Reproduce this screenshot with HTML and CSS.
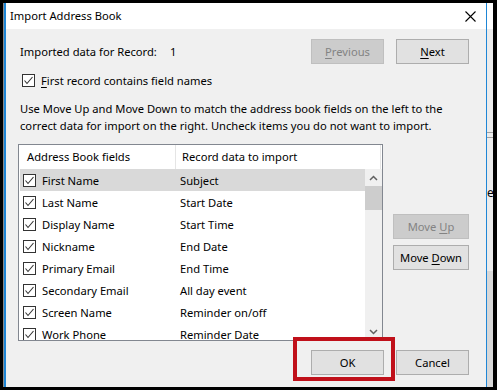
FILE: index.html
```html
<!DOCTYPE html>
<html lang="en">
<head>
<meta charset="utf-8">
<title>Import Address Book</title>
<link rel="stylesheet" href="styles.css">
</head>
<body>

<div class="screen">

<div class="dialog">

	<div class="titlebar">
		<span>Import Address Book</span>
		<svg class="close_icon" width="11" height="11" viewBox="0 0 11 11"><path d="M0.5 0.5 L10.5 10.5 M10.5 0.5 L0.5 10.5" stroke="#000" stroke-width="1.1" fill="none"/></svg>
	</div>

	<div class="content">

		<div class="record_row">
			<span class="record_label">Imported data for Record:</span>
			<span class="record_num">1</span>
			<div class="button_pair">
				<button class="win_button" disabled><u>P</u>revious</button>
				<button class="win_button"><u>N</u>ext</button>
			</div>
		</div>

		<div class="check_row">
			<span class="check"><svg width="11" height="11" viewBox="0 0 11 11"><path d="M1.5 5.5 L4 8.5 L9.5 2" stroke="#333" stroke-width="1.1" fill="none"/></svg></span>
			<span><u>F</u>irst record contains field names</span>
		</div>

		<p class="help">Use Move Up and Move Down to match the address book fields on the left to the<br>correct data for import on the right. Uncheck items you do not want to import.</p>

		<div class="mapping">

			<div class="listbox">
				<div class="list_header">
					<div class="col_fields">Address Book fields</div>
					<div class="col_data">Record data to import</div>
				</div>
				<div class="list_body">
					<div class="rows">
						<div class="row selected"><span class="check"><svg width="11" height="11" viewBox="0 0 11 11"><path d="M1.5 5.5 L4 8.5 L9.5 2" stroke="#333" stroke-width="1.1" fill="none"/></svg></span><span class="field_name">First Name</span><span>Subject</span></div>
						<div class="row"><span class="check"><svg width="11" height="11" viewBox="0 0 11 11"><path d="M1.5 5.5 L4 8.5 L9.5 2" stroke="#333" stroke-width="1.1" fill="none"/></svg></span><span class="field_name">Last Name</span><span>Start Date</span></div>
						<div class="row"><span class="check"><svg width="11" height="11" viewBox="0 0 11 11"><path d="M1.5 5.5 L4 8.5 L9.5 2" stroke="#333" stroke-width="1.1" fill="none"/></svg></span><span class="field_name">Display Name</span><span>Start Time</span></div>
						<div class="row"><span class="check"><svg width="11" height="11" viewBox="0 0 11 11"><path d="M1.5 5.5 L4 8.5 L9.5 2" stroke="#333" stroke-width="1.1" fill="none"/></svg></span><span class="field_name">Nickname</span><span>End Date</span></div>
						<div class="row"><span class="check"><svg width="11" height="11" viewBox="0 0 11 11"><path d="M1.5 5.5 L4 8.5 L9.5 2" stroke="#333" stroke-width="1.1" fill="none"/></svg></span><span class="field_name">Primary Email</span><span>End Time</span></div>
						<div class="row"><span class="check"><svg width="11" height="11" viewBox="0 0 11 11"><path d="M1.5 5.5 L4 8.5 L9.5 2" stroke="#333" stroke-width="1.1" fill="none"/></svg></span><span class="field_name">Secondary Email</span><span>All day event</span></div>
						<div class="row"><span class="check"><svg width="11" height="11" viewBox="0 0 11 11"><path d="M1.5 5.5 L4 8.5 L9.5 2" stroke="#333" stroke-width="1.1" fill="none"/></svg></span><span class="field_name">Screen Name</span><span>Reminder on/off</span></div>
						<div class="row"><span class="check"><svg width="11" height="11" viewBox="0 0 11 11"><path d="M1.5 5.5 L4 8.5 L9.5 2" stroke="#333" stroke-width="1.1" fill="none"/></svg></span><span class="field_name">Work Phone</span><span>Reminder Date</span></div>
					</div>
					<div class="scrollbar">
						<div class="scroll_arrow"><svg width="9" height="6" viewBox="0 0 9 6"><path d="M1 5 L4.5 1.5 L8 5" stroke="#606060" stroke-width="1.5" fill="none"/></svg></div>
						<div class="scroll_thumb"></div>
						<div class="scroll_track"></div>
						<div class="scroll_arrow"><svg width="9" height="6" viewBox="0 0 9 6"><path d="M1 1 L4.5 4.5 L8 1" stroke="#606060" stroke-width="1.5" fill="none"/></svg></div>
					</div>
				</div>
			</div>

			<div class="move_buttons">
				<button class="win_button wide" disabled>Move <u>U</u>p</button>
				<button class="win_button wide">Move <u>D</u>own</button>
			</div>

		</div>

		<div class="footer">
			<button class="win_button">OK</button>
			<button class="win_button">Cancel</button>
		</div>

	</div>

	<!-- red annotation box drawn over the OK button -->
	<div class="annotation"></div>

</div>

<!-- sliver of the window behind the dialog -->
<div class="behind">
	<div class="behind_top"></div>
	<div class="behind_mid">
		<div class="behind_line first"></div>
		<div class="behind_line"></div>
		<div class="behind_letter">e</div>
	</div>
	<div class="behind_bottom"></div>
</div>

</div>

</body>
</html>
```

FILE: styles.css
```css
html, body {
margin: 0;
padding: 0;
background: #000000;
height: 390px;
overflow: hidden;
}

body {
font: 11.2px "Noto Sans", "Open Sans", sans-serif;
color: #000000;
}

.screen {
display: flex;
padding-top: 3px;
height: 384px;
}


/* dialog window */


.dialog {
position: relative;
margin-left: 4px;
width: 483px;
box-sizing: border-box;
border-left: 2px solid #1e86d6;
border-right: 1px solid #1e86d6;
box-shadow: -1px 0 0 #8c8c8c;
background: #f0f0f0;
display: flex;
flex-direction: column;
}

.titlebar {
height: 26px;
flex: none;
background: #ffffff;
display: flex;
align-items: center;
justify-content: space-between;
padding-left: 4px;
padding-right: 10px;
line-height: 26px;
}

.close_icon {
margin-top: 1px;
}

.content {
padding: 10px 17px 0 14px;
}

u {
text-decoration-thickness: 1px;
text-underline-offset: 2px;
}


/* buttons */


.win_button {
font: inherit;
color: #000000;
width: 73px;
height: 25px;
padding: 0;
background: #e1e1e1;
border: 1px solid #adadad;
}

.win_button:disabled {
color: #838383;
background: #cccccc;
border-color: #bfbfbf;
}

.win_button.wide {
width: 76px;
}

.button_pair, .footer {
display: flex;
gap: 12px;
margin-left: auto;
}


/* record row */


.record_row {
display: flex;
align-items: center;
height: 25px;
}

.record_label {
width: 150px;
}

.check_row {
display: flex;
align-items: center;
height: 13px;
margin: 10px 0 0 2px;
gap: 6px;
}

.check {
display: flex;
align-items: center;
justify-content: center;
width: 13px;
height: 13px;
box-sizing: border-box;
border: 1px solid #333333;
background: #ffffff;
flex: none;
}

.help {
margin: 13px 0 0;
line-height: 17px;
white-space: nowrap;
}


/* field mapping list */


.mapping {
display: flex;
margin-top: 10px;
}

.listbox {
margin-left: -2px;
width: 365px;
height: 197px;
box-sizing: border-box;
border: 1px solid #828790;
background: #ffffff;
}

.list_header {
display: flex;
height: 24px;
line-height: 24px;
}

.col_fields {
width: 148px;
padding-left: 8px;
border-right: 1px solid #e5e5e5;
}

.col_data {
width: 198px;
padding-left: 6px;
border-right: 1px solid #e5e5e5;
}

.list_body {
display: flex;
height: 171px;
overflow: hidden;
}

.rows {
flex: 1;
padding-left: 1px;
}

.row {
display: flex;
align-items: center;
height: 22px;
padding-left: 3px;
white-space: nowrap;
}

.row.selected {
background: #d9d9d9;
}

.row .check {
margin-right: 6px;
}

.field_name {
width: 138px;
}

.scrollbar {
width: 17px;
background: #f0f0f0;
display: flex;
flex-direction: column;
}

.scroll_arrow {
height: 17px;
display: flex;
align-items: center;
justify-content: center;
}

.scroll_thumb {
height: 24px;
background: #cdcdcd;
}

.scroll_track {
flex: 1;
}

.move_buttons {
display: flex;
flex-direction: column;
gap: 6px;
margin: 70px 0 0 10px;
}

.footer {
margin-top: 9px;
justify-content: flex-end;
}

.annotation {
position: absolute;
left: 287px;
top: 334px;
width: 102px;
height: 44px;
box-sizing: border-box;
border: 4px solid #c0101a;
}


/* window behind */


.behind {
width: 6px;
display: flex;
flex-direction: column;
background: #ececec;
}

.behind_top {
height: 26px;
background: #ffffff;
}

.behind_mid {
flex: 1;
}

.behind_line {
height: 1px;
background: #a0a0a0;
margin-top: 4px;
}

.behind_line.first {
margin-top: 103px;
}

.behind_letter {
margin-top: 48px;
font-size: 12px;
line-height: 14px;
}

.behind_bottom {
height: 116px;
background: #d8d8d8;
}
```
